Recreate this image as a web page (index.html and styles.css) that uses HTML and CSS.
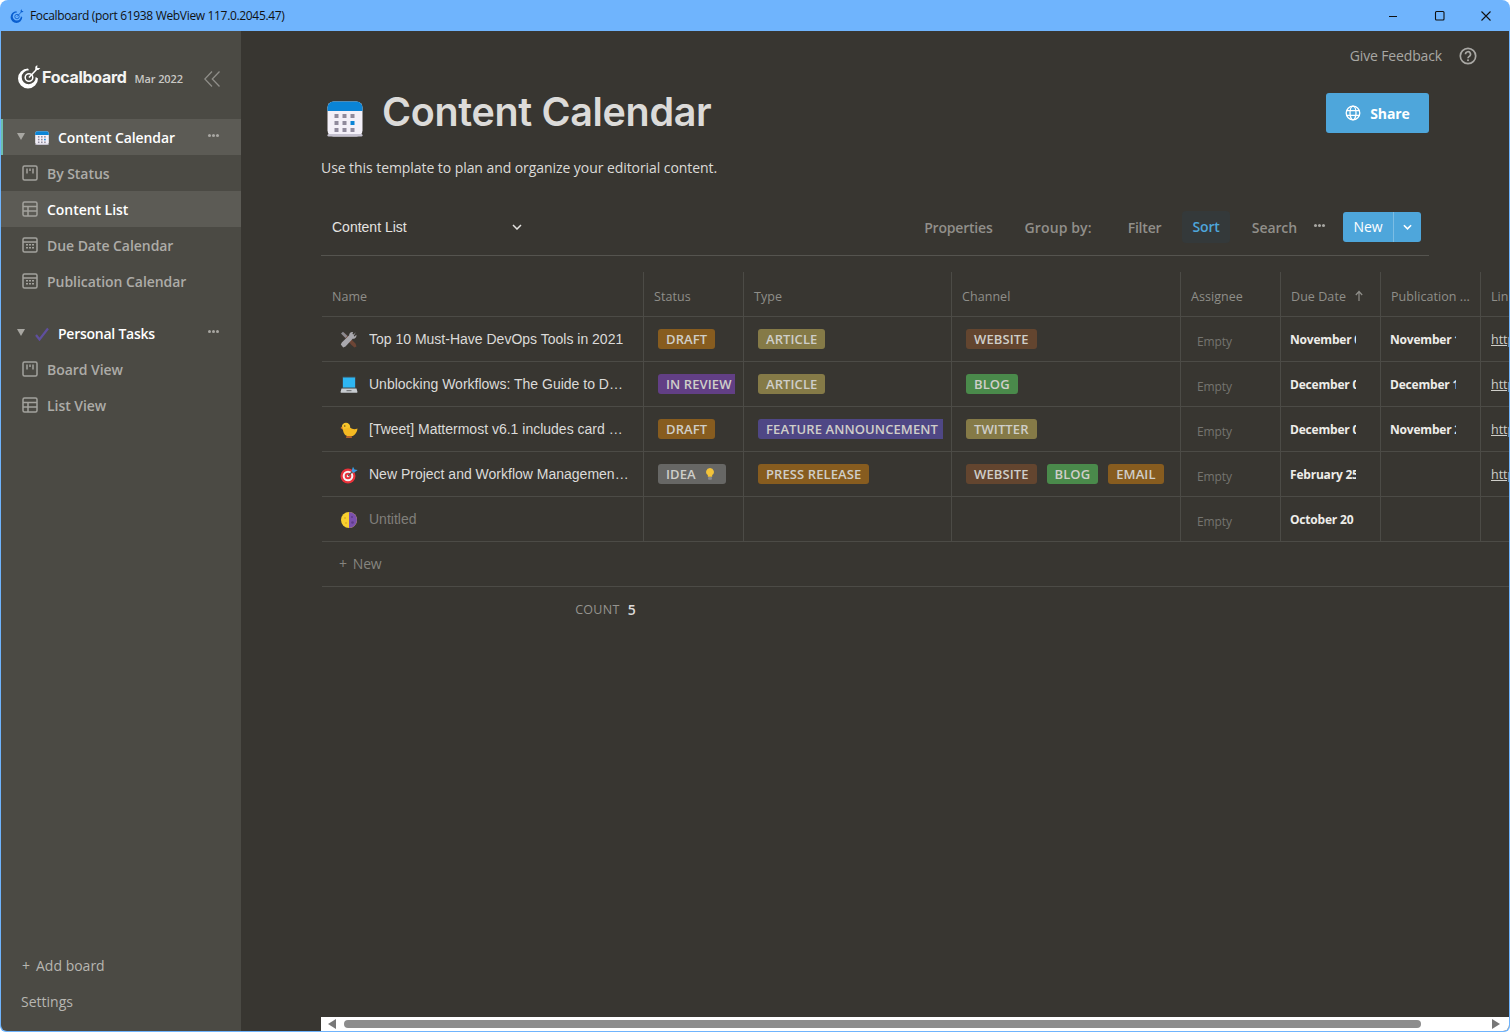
FILE: index.html
```html
<!DOCTYPE html>
<html lang="en">
<head>
<meta charset="utf-8">
<title>Focalboard</title>
<link rel="stylesheet" href="styles.css">
</head>
<body>
<svg class="defs" width="0" height="0" aria-hidden="true">
  <symbol id="i-board" viewBox="0 0 16 16"><rect x="1" y="1" width="14" height="14" rx="1.5" fill="none" stroke="currentColor" stroke-width="1.5"/><path d="M5 3.500v5M8 3.500v2.500M11 3.500v5" stroke="currentColor" stroke-width="1.500" fill="none"/></symbol>
  <symbol id="i-table" viewBox="0 0 16 16"><rect x="1" y="1" width="14" height="14" rx="1.5" fill="none" stroke="currentColor" stroke-width="1.5"/><path d="M1 5.500h14M1 10h14M6 5.500V15" stroke="currentColor" stroke-width="1.500" fill="none"/></symbol>
  <symbol id="i-cal" viewBox="0 0 16 16"><rect x="1" y="1" width="14" height="14" rx="1.5" fill="none" stroke="currentColor" stroke-width="1.5"/><path d="M1 5h14" stroke="currentColor" stroke-width="1.500"/><path d="M4 7.800h2M7 7.800h2M10 7.800h2M4 10.800h2M7 10.800h2M10 10.800h2" stroke="currentColor" stroke-width="1.400"/></symbol>
  <symbol id="i-logo" viewBox="0 0 24 24"><path d="M11 4A10 10 0 1 0 21 14L18.700 12.500A7 7 0 1 1 12 5.800Z" fill="currentColor"/><circle cx="12" cy="13" r="3.800" fill="none" stroke="currentColor" stroke-width="1.500"/><path d="M12 13 19.500 5" stroke="currentColor" stroke-width="1.500"/><path d="M18.300 5.500V2.300L20.300.6v3h3l-2 2z" fill="currentColor"/></symbol>
  <symbol id="i-calcolor" viewBox="0 0 36 36"><rect x="0.5" y="0.5" width="35" height="35" rx="6" fill="#f3f0f8"/><rect x="0.5" y="33" width="35" height="2.5" rx="1.2" fill="#c4c1cf"/><path d="M0.5 10V6.500a6 6 0 0 1 6-6h23a6 6 0 0 1 6 6V10z" fill="#0a84d6"/><g fill="#8f8a9c"><rect x="7.500" y="13" width="4" height="4"/><rect x="15.500" y="13" width="4" height="4"/><rect x="23.500" y="13" width="4" height="4"/><rect x="7.500" y="20" width="4" height="4"/><rect x="15.500" y="20" width="4" height="4"/><rect x="7.500" y="27" width="4" height="4"/><rect x="15.500" y="27" width="4" height="4"/><rect x="23.500" y="27" width="4" height="4"/></g><rect x="23.500" y="20" width="4" height="4" fill="#0a84d6"/></symbol>
  <symbol id="i-tools" viewBox="0 0 18 18"><path d="M2 3.500 4 1.500 10 7 15.500 12.500 16.500 15.500 14.500 16.500 11.500 14 7.500 9.500z" fill="#6d4535"/><path d="M15.800 1.200 13.500 3.500 12.500 3l.5-2c-2-.5-4 1-3.800 3.200L1.800 11.500.8 13.500 3.200 16.500 5.500 15.500 12.700 7.800C15 8.200 17 6.200 16.300 3.800L14.500 5.500 13.700 5z" fill="#a9a8ad"/><path d="M1 2.500 3 .8 7.500 5 5.500 7z" fill="#8b8a90"/></symbol>
  <symbol id="i-laptop" viewBox="0 0 18 18"><rect x="2" y="0.500" width="14" height="12" rx="1" fill="#3a4a52"/><rect x="3" y="1.500" width="12" height="10" fill="#2eb6f2"/><path d="M1.500 12.500h15l1 3.500a.8.8 0 0 1-.7.800H1.200a.8.800 0 0 1-.7-.8z" fill="#c8ccd0"/><rect x="6.500" y="14" width="5" height="1.200" fill="#77797c"/></symbol>
  <symbol id="i-chick" viewBox="0 0 18 18"><circle cx="6" cy="6" r="4.200" fill="#f7c52b"/><path d="M3 8C3 13 6 15.500 10 15.500 14 15.500 17 12 17.500 7.500 15 8.500 12.500 8.500 10 6.500z" fill="#f4b922"/><path d="M.5 7 2.500 5.500 3 8.500z" fill="#e9862a"/><circle cx="4.800" cy="5" r=".7" fill="#5a3a14"/><path d="M6.500 15h5l.5 2H6z" fill="#b5622a"/></symbol>
  <symbol id="i-dart" viewBox="0 0 18 18"><circle cx="8" cy="10" r="7.500" fill="#e9323a"/><circle cx="8" cy="10" r="5.300" fill="#f4f4f4"/><circle cx="8" cy="10" r="3.300" fill="#e9323a"/><circle cx="8" cy="10" r="1.300" fill="#f4f4f4"/><path d="M8 10 14 4" stroke="#555" stroke-width="1.200"/><path d="M11.500 5 13 .8 14.500 3.500 17.700 4 13.500 7z" fill="#3a9be0"/></symbol>
  <symbol id="i-moon" viewBox="0 0 18 18"><circle cx="9" cy="9" r="8" fill="#f8cf2f"/><path d="M9 1a8 8 0 0 1 0 16z" fill="#7a50ad"/><circle cx="12" cy="6" r="1" fill="#5e3b8a"/><circle cx="12.500" cy="11.500" r="1.300" fill="#5e3b8a"/><circle cx="5" cy="7" r="1" fill="#dfae22"/><circle cx="6" cy="12" r=".9" fill="#dfae22"/></symbol>
  <symbol id="i-bulb" viewBox="0 0 12 16"><path d="M6 1a4.500 4.500 0 0 0-2.500 8.200V11h5V9.200A4.500 4.500 0 0 0 6 1z" fill="#f2c33a"/><rect x="3.800" y="11.500" width="4.400" height="3" rx="1" fill="#8a8a8e"/></symbol>
</svg>

<div class="window">
  <header class="titlebar">
    <svg class="tb-logo"><use href="#i-logo"/></svg>
    <span class="tb-title">Focalboard (port 61938 WebView 117.0.2045.47)</span>
    <div class="tb-controls">
      <svg class="tb-ctl" viewBox="0 0 12 12"><path d="M1 6.500h8" stroke="#111" stroke-width="1.100" fill="none"/></svg>
      <svg class="tb-ctl" viewBox="0 0 12 12"><rect x="1.500" y="1.500" width="8.500" height="8.500" rx="1" stroke="#111" stroke-width="1.100" fill="none"/></svg>
      <svg class="tb-ctl" viewBox="0 0 12 12"><path d="M1.500 1.500l9 9M10.500 1.500l-9 9" stroke="#111" stroke-width="1.100" fill="none"/></svg>
    </div>
  </header>

  <div class="app">
    <aside class="sidebar">
      <div class="brand">
        <svg class="brand-logo"><use href="#i-logo"/></svg>
        <span class="brand-name">Focalboard</span>
        <span class="brand-ver">Mar 2022</span>
        <svg class="collapse" viewBox="0 0 16 16"><path d="M8 .5.800 8 8 15.500M15.500.5 8.300 8l7.200 7.500" fill="none" stroke="currentColor" stroke-width="1.300"/></svg>
      </div>

      <nav class="nav">
        <div class="nav-board is-active">
          <span class="caret"></span>
          <svg class="nav-emoji"><use href="#i-calcolor"/></svg>
          <span class="nav-board-title">Content Calendar</span>
          <span class="dots"><i></i><i></i><i></i></span>
        </div>
        <div class="nav-view"><svg class="nav-ico"><use href="#i-board"/></svg>By Status</div>
        <div class="nav-view is-selected"><svg class="nav-ico"><use href="#i-table"/></svg>Content List</div>
        <div class="nav-view"><svg class="nav-ico"><use href="#i-cal"/></svg>Due Date Calendar</div>
        <div class="nav-view"><svg class="nav-ico"><use href="#i-cal"/></svg>Publication Calendar</div>

        <div class="nav-board nav-gap">
          <span class="caret"></span>
          <svg class="nav-emoji" viewBox="0 0 14 14"><path d="M1 8l3.500 4.500L13 1.500" fill="none" stroke="#5f4f9e" stroke-width="2.200"/></svg>
          <span class="nav-board-title">Personal Tasks</span>
          <span class="dots"><i></i><i></i><i></i></span>
        </div>
        <div class="nav-view"><svg class="nav-ico"><use href="#i-board"/></svg>Board View</div>
        <div class="nav-view"><svg class="nav-ico"><use href="#i-table"/></svg>List View</div>
      </nav>

      <div class="side-foot">
        <div class="side-link side-add"><span class="plus">+</span>Add board</div>
        <div class="side-link">Settings</div>
      </div>
    </aside>

    <main class="main">
      <div class="feedback">
        <span class="feedback-text">Give Feedback</span>
        <svg class="help" viewBox="0 0 18 18"><circle cx="9" cy="9" r="7.700" fill="none" stroke="currentColor" stroke-width="1.700"/><path d="M6.500 7.200a2.500 2.500 0 1 1 3.700 2.200C9.400 9.900 9 10.300 9 11.200" fill="none" stroke="currentColor" stroke-width="1.700"/><circle cx="9" cy="13.300" r="1" fill="currentColor"/></svg>
      </div>

      <div class="content">
        <div class="board-head">
          <div class="title-row">
            <svg class="title-icon"><use href="#i-calcolor"/></svg>
            <h1 class="title">Content Calendar</h1>
            <button class="share">
              <svg class="globe" viewBox="0 0 16 16"><g fill="none" stroke="currentColor" stroke-width="1.300"><circle cx="8" cy="8" r="6.800"/><ellipse cx="8" cy="8" rx="3" ry="6.800"/><path d="M1.500 5.700h13M1.500 10.300h13"/></g></svg>
              Share
            </button>
          </div>
          <p class="desc">Use this template to plan and organize your editorial content.</p>
          <div class="toolbar">
            <div class="view-select">
              <span>Content List</span>
              <svg class="chev" viewBox="0 0 10 6"><path d="M1 1l4 4 4-4" fill="none" stroke="currentColor" stroke-width="1.500"/></svg>
            </div>
            <div class="tools">
              <span class="tool tool-props">Properties</span>
              <span class="tool tool-group">Group by:</span>
              <span class="tool tool-filter">Filter</span>
              <span class="tool tool-sort">Sort</span>
              <span class="tool tool-search">Search</span>
              <span class="dots tool-dots"><i></i><i></i><i></i></span>
              <div class="new-btn">
                <span class="new-main">New</span>
                <span class="new-drop"><svg class="chev-w" viewBox="0 0 10 6"><path d="M1 1l4 4 4-4" fill="none" stroke="currentColor" stroke-width="1.800"/></svg></span>
              </div>
            </div>
          </div>
        </div>

        <div class="table">
          <div class="row row-head">
            <div class="cell c-name">Name</div>
            <div class="cell c-status">Status</div>
            <div class="cell c-type">Type</div>
            <div class="cell c-channel">Channel</div>
            <div class="cell c-assignee">Assignee</div>
            <div class="cell c-date">Due Date <svg class="sort-arrow" viewBox="0 0 10 12"><path d="M5 11V2M1.800 5 5 1.500 8.200 5" fill="none" stroke="currentColor" stroke-width="1.200"/></svg></div>
            <div class="cell c-date">Publication ...</div>
            <div class="cell c-link">Link</div>
          </div>

          <div class="row">
            <div class="cell c-name"><svg class="emoji"><use href="#i-tools"/></svg><span class="name">Top 10 Must-Have DevOps Tools in 2021</span></div>
            <div class="cell c-status pad-tag"><div class="tag-clip"><span class="tag t-orange">DRAFT</span></div></div>
            <div class="cell c-type pad-tag"><div class="tag-clip"><span class="tag t-olive">ARTICLE</span></div></div>
            <div class="cell c-channel pad-tag"><span class="tag t-brown">WEBSITE</span></div>
            <div class="cell c-assignee"><span class="empty">Empty</span></div>
            <div class="cell c-date"><span class="date">November 09, 2021</span></div>
            <div class="cell c-date"><span class="date">November 12, 2021</span></div>
            <div class="cell c-link"><span class="url">https://mattermost.com</span></div>
          </div>

          <div class="row">
            <div class="cell c-name"><svg class="emoji"><use href="#i-laptop"/></svg><span class="name">Unblocking Workflows: The Guide to Developer Productivity</span></div>
            <div class="cell c-status pad-tag"><div class="tag-clip"><span class="tag t-purple">IN REVIEW</span></div></div>
            <div class="cell c-type pad-tag"><div class="tag-clip"><span class="tag t-olive">ARTICLE</span></div></div>
            <div class="cell c-channel pad-tag"><span class="tag t-green">BLOG</span></div>
            <div class="cell c-assignee"><span class="empty">Empty</span></div>
            <div class="cell c-date"><span class="date">December 01, 2021</span></div>
            <div class="cell c-date"><span class="date">December 15, 2021</span></div>
            <div class="cell c-link"><span class="url">https://mattermost.com</span></div>
          </div>

          <div class="row">
            <div class="cell c-name"><svg class="emoji"><use href="#i-chick"/></svg><span class="name">[Tweet] Mattermost v6.1 includes card attachments and more</span></div>
            <div class="cell c-status pad-tag"><div class="tag-clip"><span class="tag t-orange">DRAFT</span></div></div>
            <div class="cell c-type pad-tag"><div class="tag-clip"><span class="tag t-indigo">FEATURE ANNOUNCEMENT</span></div></div>
            <div class="cell c-channel pad-tag"><span class="tag t-olive">TWITTER</span></div>
            <div class="cell c-assignee"><span class="empty">Empty</span></div>
            <div class="cell c-date"><span class="date">December 01, 2021</span></div>
            <div class="cell c-date"><span class="date">November 24, 2021</span></div>
            <div class="cell c-link"><span class="url">https://mattermost.com</span></div>
          </div>

          <div class="row">
            <div class="cell c-name"><svg class="emoji"><use href="#i-dart"/></svg><span class="name">New Project and Workflow Management Templates</span></div>
            <div class="cell c-status pad-tag"><div class="tag-clip"><span class="tag t-gray">IDEA <svg class="bulb"><use href="#i-bulb"/></svg></span></div></div>
            <div class="cell c-type pad-tag"><div class="tag-clip"><span class="tag t-orange">PRESS RELEASE</span></div></div>
            <div class="cell c-channel pad-tag tags"><span class="tag t-brown">WEBSITE</span><span class="tag t-green">BLOG</span><span class="tag t-orange">EMAIL</span></div>
            <div class="cell c-assignee"><span class="empty">Empty</span></div>
            <div class="cell c-date"><span class="date">February 25, 2022</span></div>
            <div class="cell c-date"></div>
            <div class="cell c-link"><span class="url">https://mattermost.com</span></div>
          </div>

          <div class="row">
            <div class="cell c-name"><svg class="emoji"><use href="#i-moon"/></svg><span class="name is-untitled">Untitled</span></div>
            <div class="cell c-status"></div>
            <div class="cell c-type"></div>
            <div class="cell c-channel"></div>
            <div class="cell c-assignee"><span class="empty">Empty</span></div>
            <div class="cell c-date"><span class="date">October 20</span></div>
            <div class="cell c-date"></div>
            <div class="cell c-link"></div>
          </div>

          <div class="row row-new"><span class="new-row">+<span class="new-label">New</span></span></div>

          <div class="calc"><span class="calc-label">COUNT</span><span class="calc-value">5</span></div>
        </div>
      </div>

      <div class="scrollbar">
        <span class="sb-left"></span>
        <span class="sb-thumb"></span>
        <span class="sb-right"></span>
      </div>
    </main>
  </div>
</div>
</body>
</html>
```

FILE: styles.css
```css
* { box-sizing: border-box; }
html, body { height: 100%; }
body { margin: 0; background: #fff; overflow: hidden; font-family: "Open Sans", "Noto Sans", sans-serif; }
.defs { position: absolute; }

.window { width: 1510px; height: 1032px; display: flex; flex-direction: column; border-radius: 8px 8px 6px 6px; overflow: hidden; background: #6fb4fd; }

.titlebar { height: 31px; flex: none; display: flex; align-items: center; padding-left: 10px; color: #111; }
.tb-logo { width: 14px; height: 14px; color: #0a5fd0; margin-right: 6px; }
.tb-title { font: 12px "Open Sans", sans-serif; letter-spacing: -0.33px; }
.tb-controls { margin-left: auto; display: flex; gap: 34px; padding-right: 18px; }
.tb-ctl { width: 12px; height: 12px; display: block; }

.app { flex: 1; min-height: 0; display: flex; margin: 0 1px 1px; border-radius: 0 0 6px 6px; overflow: hidden; }

.sidebar { width: 240px; flex: none; display: flex; flex-direction: column; background: #4b4a44; color: #b7b6b1; }
.brand { height: 88px; display: flex; align-items: center; padding: 4px 0 0 16px; }
.brand-logo { width: 24px; height: 25px; color: #fff; margin: -2px 1px 0 0; }
.brand-name { font: 700 16px Inter, sans-serif; color: #f4f4f3; letter-spacing: -0.3px; }
.brand-ver { font: 600 11px "Open Sans", sans-serif; color: #c9c8c4; margin: 3px 0 0 8px; letter-spacing: -0.12px; }
.collapse { width: 16px; height: 16px; margin: 4px 0 0 21px; color: #8f8e89; }

.nav { display: flex; flex-direction: column; }
.nav-board { height: 36px; display: flex; align-items: center; padding-left: 16px; color: #fff; font-size: 14px; font-weight: 600; letter-spacing: -0.12px; }
.nav-board.is-active { background: #5c5b55; border-left: 2px solid #6cc0b0; padding-left: 14px; }
.nav-gap { margin-top: 16px; letter-spacing: -0.25px; }
.caret { width: 0; height: 0; border: 4px solid transparent; border-top: 7px solid #a8a7a2; border-bottom: 0; margin: -2px 10px 0 0; }
.nav-emoji { width: 14px; height: 14px; margin: 2px 9px 0 0; flex: none; }
.nav-board-title { flex: 1; }
.dots { display: inline-flex; gap: 1px; }
.dots i { width: 3px; height: 3px; background: #a8a7a2; border-radius: 50%; }
.nav-board .dots { margin: -3px 22px 0 0; }
.nav-view { height: 36px; display: flex; align-items: center; padding-left: 21px; font-size: 14px; font-weight: 600; color: #adaca8; letter-spacing: -0.05px; }
.nav-view.is-selected { background: #5c5b55; color: #fff; }
.nav-ico { width: 16px; height: 16px; margin-right: 9px; color: #a3a29d; flex: none; }

.side-foot { margin-top: auto; padding-bottom: 12px; }
.side-link { height: 36px; display: flex; align-items: center; padding-left: 20px; font-size: 14px; color: #b7b6b1; }
.side-add { padding-left: 21px; }
.plus { margin-right: 6px; }

.main { flex: 1; min-width: 0; display: flex; flex-direction: column; background: #383631; overflow: hidden; }
.feedback { height: 50px; flex: none; display: flex; align-items: center; justify-content: flex-end; gap: 17px; padding-right: 32px; color: #a9a8a4; }
.feedback-text { font-size: 14px; letter-spacing: -0.15px; margin-top: -2px; }
.help { width: 18px; height: 18px; }

.content { flex: 1; min-height: 0; padding-left: 80px; overflow: hidden; }
.board-head { width: 1108px; }
.title-row { height: 63px; display: flex; align-items: center; position: relative; padding-left: 6px; }
.title-icon { width: 36px; height: 36px; margin: 12px 19px 0 0; flex: none; }
.title { margin: -2px 0 0; font: 600 39.500px Inter, sans-serif; color: #dcdbd9; letter-spacing: -0.35px; }
.share { margin: 1px 0 0 auto; width: 103px; height: 40px; display: flex; align-items: center; justify-content: center; gap: 9px; border: 0; border-radius: 3px; background: #4ea6db; color: #fff; font: 700 14px "Open Sans", sans-serif; letter-spacing: -0.1px; }
.globe { width: 16px; height: 16px; }
.desc { margin: 12px 0 0; height: 24px; line-height: 24px; font-size: 14px; color: #dcdbd9; letter-spacing: -0.065px; }

.toolbar { margin-top: 32px; padding-bottom: 13px; height: 44px; display: flex; align-items: flex-start; border-bottom: 1px solid #55544f; }
.view-select { width: 201px; height: 30px; display: flex; align-items: center; justify-content: space-between; padding: 0 0 0 11px; font: 14px "Liberation Sans", sans-serif; color: #e4e3e0; }
.chev { width: 10px; height: 6px; }
.tools { margin-left: auto; display: flex; align-items: center; height: 30px; padding-right: 8px; font-size: 14px; font-weight: 600; color: #918f8a; letter-spacing: -0.1px; }
.tool { display: block; }
.tool-props { letter-spacing: -0.2px; }
.tool-group { margin-left: 32px; letter-spacing: 0.12px; }
.tool-filter { margin-left: 36px; letter-spacing: -0.2px; }
.tool-sort { margin-left: 21px; height: 32px; padding: 0 10px; line-height: 32px; border-radius: 4px; background: #34393a; color: #4ea6db; }
.tool-search { margin-left: 22px; }
.tool-dots { margin: -3px 18px 0 17px; }
.new-btn { display: flex; height: 30px; border-radius: 3px; overflow: hidden; background: #4ea6db; color: #fff; font-weight: 400; }
.new-main { width: 50px; line-height: 30px; text-align: center; }
.new-drop { width: 28px; display: flex; align-items: center; justify-content: center; border-left: 1px solid #7cbde4; }
.chev-w { width: 9px; height: 6px; }

.table { margin-top: 16px; width: 1300px; font-size: 14px; }
.row { height: 45px; display: flex; border-bottom: 1px solid #4c4b46; margin-left: 1px; }
.row-head { color: #8f8e89; font-size: 12.500px; letter-spacing: 0.06px; }
.row-head .cell { padding-top: 4px; }
.cell { flex: none; height: 100%; display: flex; align-items: center; padding-left: 10px; border-right: 1px solid #4c4b46; white-space: nowrap; overflow: hidden; }
.c-name { width: 322px; }
.c-status { width: 100px; }
.c-type { width: 208px; }
.c-channel { width: 229px; }
.c-assignee { width: 100px; }
.c-date { width: 100px; }
.c-link { width: 100px; border-right: 0; }
.pad-tag { padding: 0 8px 0 14px; }
.tags { gap: 10px; }
.tag-clip { display: flex; min-width: 0; overflow: hidden; }

.emoji { width: 18px; height: 18px; margin: 2px 11px 0 8px; flex: none; }
.name { font: 14px "Liberation Sans", sans-serif; color: #dcdbd9; width: 260px; overflow: hidden; text-overflow: ellipsis; display: block; }
.is-untitled { color: #807f7a; }

.tag { flex: none; height: 20px; padding: 0 8px; display: inline-flex; align-items: center; border-radius: 3px; font-size: 13px; font-weight: 600; color: #cfcec9; letter-spacing: 0.1px; }
.t-orange { background: #875c1f; }
.t-olive { background: #857a47; }
.t-brown { background: #63452f; }
.t-purple { background: #623f85; }
.t-indigo { background: #4f4785; }
.t-green { background: #4a8a4b; }
.t-gray { background: #676765; gap: 8px; padding-right: 10px; }
.bulb { width: 12px; height: 14px; }

.empty { font-size: 12px; color: #75746f; margin: 5px 0 0 6px; letter-spacing: -0.1px; }
.date { display: block; width: 66px; overflow: hidden; font-size: 12px; font-weight: 700; color: #eeede9; margin-left: -1px; letter-spacing: -0.2px; }
.url { font-size: 12.500px; color: #cfcec9; text-decoration: underline; }
.sort-arrow { width: 10px; height: 12px; margin-left: 8px; }

.row-new { align-items: center; padding-bottom: 1px; }
.new-row { padding-left: 17px; font-size: 14px; color: #86857f; letter-spacing: -0.2px; }
.new-label { margin-left: 6px; }

.calc { width: 315px; height: 44px; display: flex; align-items: center; justify-content: flex-end; gap: 8px; font-size: 12.500px; color: #95948f; letter-spacing: 0.3px; }
.calc-value { font-size: 14px; font-weight: 600; color: #dcdbd9; }

.scrollbar { margin-left: 80px; height: 14px; flex: none; display: flex; align-items: center; background: #fff; position: relative; padding: 0 9px 0 7px; }
.sb-left { width: 0; height: 0; border: 5px solid transparent; border-right: 8px solid #777; border-left: 0; }
.sb-thumb { width: 1077px; height: 8px; margin-left: 8px; border-radius: 4px; background: #8c8c8c; }
.sb-right { margin-left: auto; width: 0; height: 0; border: 5px solid transparent; border-left: 8px solid #777; border-right: 0; }
```
